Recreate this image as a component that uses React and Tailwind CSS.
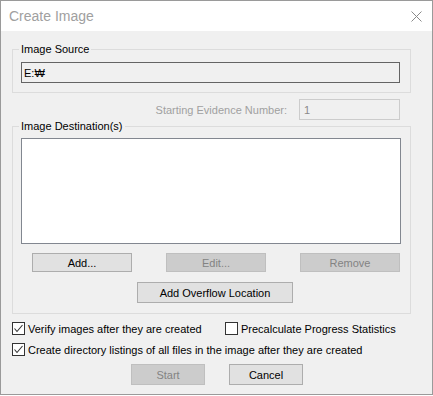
import React from 'react';

const Check = ({ checked }) => (
  <span className="w-[13px] h-[13px] border border-[#333333] bg-white flex items-center justify-center shrink-0">
    {checked && (
      <svg width="11" height="11" viewBox="0 0 11 11">
        <polyline points="1.5,5.5 4,8.5 9.5,2" fill="none" stroke="#333333" strokeWidth="1.1" />
      </svg>
    )}
  </span>
);

const Btn = ({ children, disabled, className = '' }) => (
  <div
    className={
      'flex items-center justify-center border ' +
      (disabled ? 'bg-[#cccccc] border-[#bfbfbf] text-[#838383] ' : 'bg-[#e1e1e1] border-[#adadad] text-black ') +
      className
    }
  >
    {children}
  </div>
);

const App = () => {
  return (
    <div className="w-[433px] h-[396px] bg-white font-['Liberation_Sans',Arial,sans-serif] text-[11px] leading-[14px] text-black">
      <div className="h-[395px] border border-[#9a9a9a] flex flex-col bg-[#f0f0f0]">
        {/* title bar */}
        <div className="h-[30px] bg-white flex items-center justify-between pl-[8px] pr-[10px]">
          <span className="text-[14px] text-[#a0a0a0]">Create Image</span>
          <svg width="11" height="11" viewBox="0 0 11 11">
            <path d="M0.5 0.5 L10.5 10.5 M10.5 0.5 L0.5 10.5" stroke="#8a8a8a" strokeWidth="1" fill="none" />
          </svg>
        </div>

        <div className="flex-1 pt-[11px]">
          <fieldset className="ml-[11px] w-[399px] border border-[#dcdcdc] pb-[9px]">
            <legend className="ml-[6px] px-[2px] leading-[14px]">Image Source</legend>
            <div className="mt-[6px] ml-[8px] w-[379px] h-[21px] border border-[#646464] bg-[#f0f0f0] flex items-center pl-[2px]">
              E:₩
            </div>
          </fieldset>

          <div className="mt-[6px] ml-[11px] w-[399px] pr-[11px] flex items-center justify-end gap-[12px]">
            <span className="text-[#a0a0a0]">Starting Evidence Number:</span>
            <div className="w-[101px] h-[21px] border border-[#cccccc] bg-[#f0f0f0] flex items-center pl-[4px] text-[#8a8a8a]">
              1
            </div>
          </div>

          <fieldset className="mt-[-1px] ml-[11px] w-[399px] border border-[#dcdcdc] pb-[10px]">
            <legend className="ml-[6px] px-[2px] leading-[14px]">Image Destination(s)</legend>
            <div className="mt-[5px] ml-[8px] w-[380px] h-[106px] border border-[#828790] bg-white" />
            <div className="mt-[9px] ml-[19px] flex gap-[34px]">
              <Btn className="w-[100px] h-[19px]">Add...</Btn>
              <Btn disabled className="w-[100px] h-[19px]">Edit...</Btn>
              <Btn disabled className="w-[100px] h-[19px]">Remove</Btn>
            </div>
            <Btn className="mt-[10px] ml-[124px] w-[156px] h-[21px]">Add Overflow Location</Btn>
          </fieldset>

          <div className="mt-[8px] ml-[11px] flex items-center h-[13px]">
            <div className="w-[213px] flex items-center">
              <Check checked />
              <span className="ml-[3px]">Verify images after they are created</span>
            </div>
            <Check />
            <span className="ml-[3px]">Precalculate Progress Statistics</span>
          </div>
          <div className="mt-[8px] ml-[11px] flex items-center h-[13px]">
            <Check checked />
            <span className="ml-[3px]">Create directory listings of all files in the image after they are created</span>
          </div>

          <div className="mt-[8px] flex">
            <Btn disabled className="ml-[130px] w-[74px] h-[21px]">Start</Btn>
            <Btn className="ml-[24px] w-[74px] h-[21px]">Cancel</Btn>
          </div>
        </div>
      </div>
    </div>
  );
};

export default App;
